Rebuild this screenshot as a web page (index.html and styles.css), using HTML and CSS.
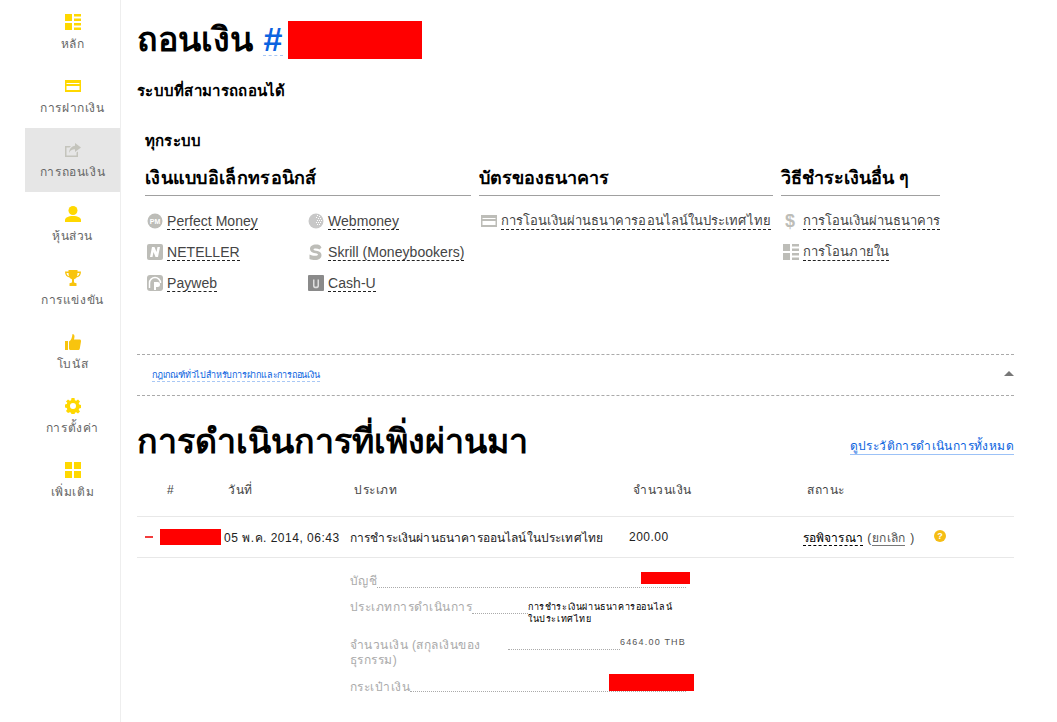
FILE: index.html
```html
<!DOCTYPE html>
<html lang="th">
<head>
<meta charset="utf-8">
<title>ถอนเงิน</title>
<link rel="stylesheet" href="styles.css">
</head>
<body>
<div class="page">
  <nav class="sidebar">
    <a class="nav-item"><svg class="nav-icon" viewBox="0 0 16 16"><path d="M0 0h7v7H0zM0 9h7v7H0zM9 0h7v2.500H9zM9 4.500h7V7H9zM9 9h7v2.500H9zM9 13.500h7V16H9z"/></svg><span>หลัก</span></a>
    <a class="nav-item"><svg class="nav-icon" viewBox="0 0 16 12"><path fill-rule="evenodd" d="M0 0h16v12H0zM1.500 3v1h13V3zM1.500 6v4h13V6z"/></svg><span>การฝากเงิน</span></a>
    <a class="nav-item active"><svg class="nav-icon" viewBox="0 0 16 14"><path d="M10 0l6 4.500-6 4.500V6.300C7 6.300 5.200 7.500 4 10c.2-4 2.500-6.700 6-7.200z"/><path d="M0 3h6L4.500 4.500H1.500v8h10V9.500l1.500-1V14H0z"/></svg><span>การถอนเงิน</span></a>
    <a class="nav-item"><svg class="nav-icon" viewBox="0 0 16 16"><circle cx="8" cy="4.500" r="4.500"/><path d="M0 16v-2c0-2 3-4 8-4s8 2 8 4v2z"/></svg><span>หุ้นส่วน</span></a>
    <a class="nav-item"><svg class="nav-icon gold" viewBox="0 0 16 16"><path fill-rule="evenodd" d="M3.500 0h9v1.500H16c0 3.500-1.500 5.500-4.500 6C10.800 8.500 9.500 9 9 9.500V12c0 .8 1 1 2.500 1.200V16h-7v-2.800C6 13 7 12.800 7 12V9.500C6.500 9 5.200 8.500 4.500 7.500 1.500 7 0 5 0 1.500h3.500zM1.500 3c.2 1.600 1 2.700 2.500 3.200-.3-1-.5-2-.5-3.200zM14.500 3h-2c0 1.200-.2 2.200-.5 3.200 1.500-.5 2.300-1.600 2.500-3.200z"/></svg><span>การแข่งขัน</span></a>
    <a class="nav-item"><svg class="nav-icon gold" viewBox="0 0 16 16"><path d="M0 7h3v9H0zM4 7.500c2-1 3-3.500 3.500-7.500 2 0 2.500 2 1.500 5.500h5.500c1.200 0 1.700 1 1.500 2l-1.200 7c-.2 1-.8 1.500-1.800 1.500H6c-1 0-2-.5-2-1z"/></svg><span>โบนัส</span></a>
    <a class="nav-item"><svg class="nav-icon" viewBox="0 0 16 16"><path fill-rule="evenodd" d="M6.500 0h3l.4 2.200 1.300.5L13 1.400 15 3.500l-1.300 1.800.5 1.300 2 .4v3l-2 .4-.5 1.300 1.300 1.800-2 2-1.800-1.300-1.300.5-.4 2.100h-3l-.4-2.100-1.300-.5L3 15 1 13l1.300-1.800-.5-1.300-2-.4v-3l2-.4.5-1.300L1 3.500 3 1.400l1.800 1.300 1.300-.5zM8 5a3 3 0 1 0 0 6 3 3 0 0 0 0-6z"/></svg><span>การตั้งค่า</span></a>
    <a class="nav-item"><svg class="nav-icon" viewBox="0 0 16 16"><path d="M0 0h7v7H0zM9 0h7v7H9zM0 9h7v7H0zM9 9h7v7H9z"/></svg><span>เพิ่มเติม</span></a>
  </nav>

  <main class="content">
    <h1 class="title">ถอนเงิน <a class="hash">#</a><span class="redact redact-title"></span></h1>
    <p class="subtitle">ระบบที่สามารถถอนได้</p>

    <section class="systems">
      <div class="all-label">ทุกระบบ</div>
      <div class="groups">
        <div class="group group-e">
          <h2 class="group-title">เงินแบบอิเล็กทรอนิกส์</h2>
          <div class="pay-grid">
            <a class="pay"><svg class="pay-icon" viewBox="0 0 16 16"><circle cx="8" cy="8" r="7.500"/><text x="8" y="10.500" class="ic-t">PM</text></svg><span class="pay-text">Perfect Money</span></a>
            <a class="pay"><svg class="pay-icon" viewBox="0 0 16 16"><circle cx="8" cy="8" r="7.500" fill="#c8c8c8"/><path class="ic-w" d="M9 2h1v1H9zM11 3h1v1h-1zM8 4h1v1H8zM10 5h1v1h-1zM12 5h1v1h-1zM9 7h1v1H9zM11 7h1v1h-1zM13 7h1v1h-1zM8 9h1v1H8zM10 9h1v1h-1zM12 9h1v1h-1zM9 11h1v1H9zM11 11h1v1h-1z"/></svg><span class="pay-text">Webmoney</span></a>
            <a class="pay"><svg class="pay-icon" viewBox="0 0 16 16"><rect width="16" height="16" rx="2"/><path class="ic-w" d="M3 13L5 3h2.500l2 5 1-5H13l-2 10H8.500l-2-5-1 5z"/></svg><span class="pay-text">NETELLER</span></a>
            <a class="pay"><svg class="pay-icon" viewBox="0 0 16 16"><path d="M13.500 3.500C12.500 1 10.500.5 8 .5c-3.500 0-6 1.500-6 4.500 0 5 8 3.500 8 5.500 0 1-1.200 1.300-3 1.300-2 0-3.800-.5-5.500-1.300V15c1.500.7 3.500 1 5.500 1 4 0 6.500-1.500 6.500-5 0-5-8-3.700-8-5.500 0-.7.800-1 2.200-1 1.500 0 2.800.3 3.800 1z"/></svg><span class="pay-text">Skrill (Moneybookers)</span></a>
            <a class="pay"><svg class="pay-icon" viewBox="0 0 16 16"><rect width="16" height="16" rx="3"/><path class="ic-w-s" d="M2.500 13V8a5.500 5.500 0 0 1 11 0"/><path class="ic-w" d="M7 7h3.500a2.500 2.500 0 0 1 0 5H9v3H7z"/></svg><span class="pay-text">Payweb</span></a>
            <a class="pay"><svg class="pay-icon dark" viewBox="0 0 16 16"><rect width="16" height="16" rx="1"/><path class="ic-u" d="M5 4.500h1.500v6c0 .8.600 1.200 1.500 1.200s1.500-.4 1.500-1.200v-6H11v6.500c0 1.500-1.200 2.300-3 2.300s-3-.8-3-2.300z"/></svg><span class="pay-text">Cash-U</span></a>
          </div>
        </div>
        <div class="group group-b">
          <h2 class="group-title">บัตรของธนาคาร</h2>
          <a class="pay"><svg class="pay-icon" viewBox="0 0 16 12"><path fill-rule="evenodd" d="M0 0h16v12H0zM1.500 3v1h13V3zM1.500 6v4h13V6z"/></svg><span class="pay-text th">การโอนเงินผ่านธนาคารออนไลน์ในประเทศไทย</span></a>
        </div>
        <div class="group group-o">
          <h2 class="group-title">วิธีชำระเงินอื่น ๆ</h2>
          <div class="pay-col">
            <a class="pay"><span class="dollar">$</span><span class="pay-text th">การโอนเงินผ่านธนาคาร</span></a>
            <a class="pay"><svg class="pay-icon" viewBox="0 0 16 16"><path d="M0 0h7v7H0zM0 9h7v7H0zM9 0h7v2.500H9zM9 4.500h7V7H9zM9 9h7v2.500H9zM9 13.500h7V16H9z"/></svg><span class="pay-text th">การโอนภายใน</span></a>
          </div>
        </div>
      </div>
    </section>

    <div class="rules"><a class="rules-link">กฎเกณฑ์ทั่วไปสำหรับการฝากและการถอนเงิน</a><span class="caret"></span></div>

    <div class="recent-head">
      <h1 class="recent-title">การดำเนินการที่เพิ่งผ่านมา</h1>
      <a class="history-link">ดูประวัติการดำเนินการทั้งหมด</a>
    </div>

    <div class="thead">
      <span>#</span><span>วันที่</span><span>ประเภท</span><span>จำนวนเงิน</span><span>สถานะ</span>
    </div>
    <div class="trow">
      <span class="minus"></span>
      <span class="redact redact-id"></span>
      <span>05 พ.ค. 2014, 06:43</span>
      <span class="t-type">การชำระเงินผ่านธนาคารออนไลน์ในประเทศไทย</span>
      <span>200.00</span>
      <span class="t-status"><a class="pending">รอพิจารณา</a> <span class="paren">(<a class="cancel">ยกเลิก</a> )</span></span>
      <span class="help">?</span>
    </div>

    <div class="details">
      <div class="d-row d-r1"><span class="d-label">บัญชี</span><span class="d-dots"></span><span class="redact redact-acc"></span></div>
      <div class="d-row d-r2"><span class="d-label">ประเภทการดำเนินการ</span><span class="d-dots"></span><span class="d-value d-type">การชำระเงินผ่านธนาคารออนไลน์<br>ในประเทศไทย</span></div>
      <div class="d-row d-r3"><span class="d-label d-label-wide">จำนวนเงิน (สกุลเงินของธุรกรรม)</span><span class="d-dots d-dots-up"></span><span class="d-value d-amount">6464.00 THB</span></div>
      <div class="d-row d-r4"><span class="d-label">กระเป๋าเงิน</span><span class="d-dots d-dots-up"></span><span class="redact redact-wallet"></span></div>
    </div>
  </main>
</div>
</body>
</html>
```
FILE: styles.css
```css
* { box-sizing: border-box; }
html, body { margin: 0; padding: 0; background: #fff; }
body { font-family: "Liberation Sans", Arial, "Noto Sans", sans-serif; color: #111; font-size: 14px; }
.page { display: flex; width: 1057px; height: 722px; overflow: hidden; }

.sidebar { width: 121px; flex: none; border-right: 1px solid #eee; padding-left: 25px; }
.nav-item { display: flex; flex-direction: column; align-items: center; height: 64px; padding-top: 14px; font-size: 12px; letter-spacing: .6px; color: #666; }
.nav-item span { margin-top: 6px; line-height: 16px; white-space: nowrap; }
.nav-item.active { background: #e6e6e6; }
.nav-icon { width: 16px; height: 16px; fill: #ffd800; display: block; }
.nav-icon.gold { fill: #f8c40e; }
.nav-item.active .nav-icon { fill: #c4c4bc; }

.content { flex: 1; padding: 0 43px 0 16px; min-width: 0; }
.title { margin: 19px 0 0; font-size: 34px; line-height: 40px; font-weight: 700; color: #000; display: flex; align-items: flex-start; white-space: pre; }
.hash { color: #0a63e0; border-bottom: 1px dashed #a9c8f5; height: 37px; margin-left: 1px; padding-right: 1px; }
.redact { display: block; background: #f00; }
.redact-title { width: 134px; height: 38px; margin-left: 5px; margin-top: 2px; }
.subtitle { margin: 22px 0 0; font-size: 15px; line-height: 20px; font-weight: 700; color: #000; letter-spacing: .3px; }

.systems { margin-top: 30px; padding-left: 8px; height: 223px; }
.all-label { font-size: 15px; line-height: 20px; font-weight: 700; color: #000; letter-spacing: .2px; }
.groups { display: flex; gap: 8px; margin-top: 10px; }
.group-title { margin: 0 0 14px; font-size: 18px; line-height: 34px; height: 35px; font-weight: 700; color: #000; border-bottom: 1px solid #a0a0a0; white-space: nowrap; }
.group-e { width: 326px; }
.group-e .group-title { letter-spacing: .3px; }
.group-b { width: 294px; }
.group-o { width: 159px; }
.pay-grid { display: grid; grid-template-columns: 161px 1fr; row-gap: 9px; padding-left: 2px; }
.pay-col { display: flex; flex-direction: column; gap: 9px; padding-left: 2px; }
.pay { display: flex; align-items: center; height: 22px; white-space: nowrap; }
.pay-icon { width: 16px; height: 16px; fill: #bdbdb8; flex: none; margin-right: 4px; display: block; }
.pay-icon.dark { fill: #8a8a8a; }
.group-b .pay-icon { margin-left: 2px; }
.pay-text { font-size: 14px; line-height: 16px; letter-spacing: .05px; color: #444; border-bottom: 1px dashed #222; }
.pay-text.th { font-size: 13px; letter-spacing: .08px; }
.dollar { width: 20px; flex: none; font-size: 18px; font-weight: 700; color: #bdbdb8; padding-left: 2px; }
.ic-t { font: 700 7px "Liberation Sans", sans-serif; fill: #fff; text-anchor: middle; }
.ic-w { fill: #fff; }
.ic-u { fill: #ddd; }
.ic-w-s { fill: none; stroke: #fff; stroke-width: 1.500; }

.rules { display: flex; align-items: center; justify-content: space-between; height: 42px; padding-left: 15px; border-top: 1px dashed #aaa; border-bottom: 1px dashed #aaa; }
.rules-link { font-size: 9px; line-height: 11px; letter-spacing: -.2px; color: #0a63e0; border-bottom: 1px dashed #a9c8f5; margin-top: 2px; }
.caret { width: 0; height: 0; border-style: solid; border-color: transparent; border-width: 0 5px 5px; border-bottom-color: #777; margin-top: -3px; }

.recent-head { display: flex; justify-content: space-between; align-items: flex-end; margin-top: 25px; height: 40px; }
.recent-title { margin: 0; font-size: 34px; line-height: 40px; font-weight: 700; color: #000; white-space: nowrap; }
.history-link { font-size: 12px; line-height: 15px; letter-spacing: .4px; color: #0a63e0; border-bottom: 1px solid #9cc2f7; margin-bottom: 6px; }

.thead { display: grid; grid-template-columns: 61px 126px 279px 174px 1fr; padding-left: 30px; margin-top: 19px; height: 37px; align-items: start; border-bottom: 1px solid #e8e8e8; font-size: 12px; line-height: 20px; letter-spacing: .5px; color: #444; }
.trow { display: grid; grid-template-columns: 23px 64px 126px 279px 174px 131px 1fr; height: 41px; align-items: center; border-bottom: 1px solid #e8e8e8; font-size: 12px; letter-spacing: .5px; color: #222; white-space: nowrap; }
.t-type { letter-spacing: .15px; }
.t-status { letter-spacing: .1px; }
.minus { width: 8px; height: 2px; background: #f23c3c; margin-left: 8px; }
.redact-id { width: 61px; height: 16px; }
.pending { color: #000; border-bottom: 1px dashed #000; }
.cancel { color: #555; border-bottom: 1px solid #777; margin-left: 1px; margin-right: 2px; }
.paren { color: #444; margin-left: 1px; }
.help { width: 12px; height: 12px; border-radius: 50%; background: #f5bd14; color: #fff; font-size: 9px; font-weight: 700; line-height: 12px; text-align: center; letter-spacing: 0; margin-top: -3px; }

.details { width: 336px; margin-left: 213px; padding-top: 14px; font-size: 12px; letter-spacing: .45px; color: #aaa; }
.d-row { display: flex; align-items: flex-start; position: relative; }
.d-r1 { height: 26px; }
.d-r2 { height: 38px; }
.d-r3 { height: 42px; }
.d-label { line-height: 15px; flex: none; padding-top: 2px; }
.d-label-wide { width: 158px; white-space: normal; }
.d-dots { flex: 1; border-bottom: 1px dotted #aaa; height: 14px; margin-top: 2px; }
.d-dots-up { height: 12px; }
.d-value { flex: none; color: #555; font-size: 9px; line-height: 12px; }
.d-type { width: 158px; color: #000; letter-spacing: .6px; margin-top: 3px; white-space: nowrap; }
.d-amount { letter-spacing: 1.2px; }
.redact-acc { position: absolute; right: -4px; top: 0; width: 49px; height: 12px; }
.redact-wallet { position: absolute; right: -8px; top: -4px; width: 85px; height: 17px; }
```
